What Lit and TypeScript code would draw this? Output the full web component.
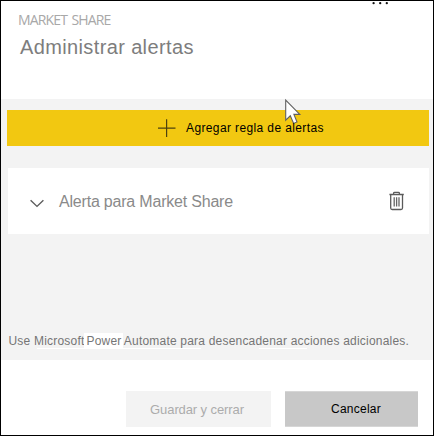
import { LitElement, html, css } from "lit";
import { customElement } from "lit/decorators.js";

@customElement("app-root")
export class AppRoot extends LitElement {
  static styles = css`
    :host {
      display: block;
      font-family: "Liberation Sans", Arial, sans-serif;
      font-size: 12px;
    }
    .panel {
      position: relative;
      box-sizing: border-box;
      width: 434px;
      height: 436px;
      border: 1px solid #000;
      background: #fff;
      display: flex;
      flex-direction: column;
      overflow: hidden;
      white-space: nowrap;
    }
    svg { display: block; flex: none; }
    header {
      box-sizing: border-box;
      height: 98px;
      padding: 10px 0 0 17px;
    }
    .more { position: absolute; left: 371px; top: 0; }
    .kicker {
      font: 14px/18px "Open Sans", "Noto Sans", sans-serif;
      letter-spacing: -0.85px;
      word-spacing: 1.6px;
      color: #a8a8a8;
    }
    h1 {
      margin: 6px 0 0 2px;
      font-size: 20px;
      line-height: 24px;
      font-weight: 400;
      letter-spacing: 0.37px;
      color: #7d7d7d;
    }
    main {
      box-sizing: border-box;
      height: 261px;
      background: #f3f3f3;
      padding: 11px 4px 0 6px;
    }
    button {
      font: inherit;
      border: 0;
      padding: 0;
      margin: 0;
      display: flex;
      align-items: center;
      box-sizing: border-box;
    }
    .add {
      width: 100%;
      height: 36px;
      background: #f2c811;
      color: #000;
      padding-left: 151px;
      gap: 10px;
      letter-spacing: 0.38px;
    }
    .label { position: relative; z-index: 2; }
    .card {
      display: flex;
      align-items: center;
      box-sizing: border-box;
      height: 66px;
      margin: 22px 0 0 1px;
      padding: 2px 24px 0 22px;
      background: #fff;
      color: #8a8a8a;
      font-size: 16px;
      letter-spacing: -0.2px;
    }
    .chevron { margin-top: 2px; }
    .name { flex: 1; margin-left: 15px; }
    .trash { margin-top: -3px; }
    .hint {
      margin: 99px 0 0 1px;
      padding-left: 0.5px;
      line-height: 16px;
      letter-spacing: 0.2px;
      color: #757575;
    }
    .mark {
      background: #fff;
      padding: 1px 1px 1px 2px;
      margin: 0 -1.5px 0 -3.5px;
    }
    .rules {
      display: flex;
      gap: 58px;
      margin: -1px 0 0 30px;
    }
    .rule { height: 1px; background: #fff; }
    .long { width: 164px; }
    .short { width: 48px; }
    footer {
      display: flex;
      justify-content: flex-end;
      gap: 14px;
      padding: 31px 15px 0 0;
    }
    .save, .cancel { height: 36px; justify-content: center; }
    .save {
      width: 145px;
      background: #f3f3f3;
      color: #acacac;
      font-size: 13px;
      letter-spacing: -0.1px;
      padding-right: 3px;
    }
    .cancel {
      width: 133px;
      background: #c8c8c8;
      border: solid #d6d6d6;
      border-width: 1px 0;
      color: #000;
      padding-left: 9px;
      letter-spacing: 0.25px;
    }
    .pointer { position: absolute; z-index: 1; left: 283px; top: 97px; }
  `;

  render() {
    return html`
      <div class="panel">
        <header>
          <svg class="more" width="18" height="5" viewBox="0 0 18 5" fill="#111">
            <circle cx="1.6" cy="2.2" r="1.15" /><circle cx="8.2" cy="2.2" r="1.15" /><circle cx="14.8" cy="2.2" r="1.15" />
          </svg>
          <div class="kicker">MARKET SHARE</div>
          <h1>Administrar alertas</h1>
        </header>
        <main>
          <button class="add">
            <svg width="18" height="18" viewBox="0 0 18 18" fill="none" stroke="#4d420f" stroke-width="1.2">
              <path d="M0 9.1H17.5M8.6 0.3V18" />
            </svg>
            <span class="label">Agregar regla de alertas</span>
          </button>
          <div class="card">
            <svg class="chevron" width="14" height="9" viewBox="0 0 14 9" fill="none" stroke="#5c5c5c" stroke-width="1.4">
              <path d="M0.6 1.2L7 7.4L13.4 1.2" />
            </svg>
            <span class="name">Alerta para Market Share</span>
            <svg class="trash" width="16" height="20" viewBox="0 0 16 20" fill="none" stroke="#5a5a5a" stroke-width="1.3">
              <path d="M0.4 3.5H14.8M4.6 3.3V2.2Q4.6 1.4 5.6 1.4H9.4Q10.4 1.4 10.4 2.2V3.3M1.7 3.6V17Q1.7 18.5 3.2 18.5H12Q13.5 18.5 13.5 17V3.6" />
              <path d="M5.2 6.3V15.5M7.6 6.3V15.5M10 6.3V15.5" stroke="#666" />
            </svg>
          </div>
          <div class="hint">Use Microsoft <span class="mark">Power</span> Automate para desencadenar acciones adicionales.</div>
          <div class="rules"><span class="rule long"></span><span class="rule short"></span></div>
        </main>
        <footer>
          <button class="save" disabled>Guardar y cerrar</button>
          <button class="cancel">Cancelar</button>
        </footer>
        <svg class="pointer" width="18" height="28" viewBox="0 0 18 28">
          <path d="M1.7 2.2V22.2L6.3 17.8L9.6 25.4L13 24L9.9 16.4H15.8Z" fill="#fff" stroke="#606060" stroke-width="1.1" />
        </svg>
      </div>
    `;
  }
}
